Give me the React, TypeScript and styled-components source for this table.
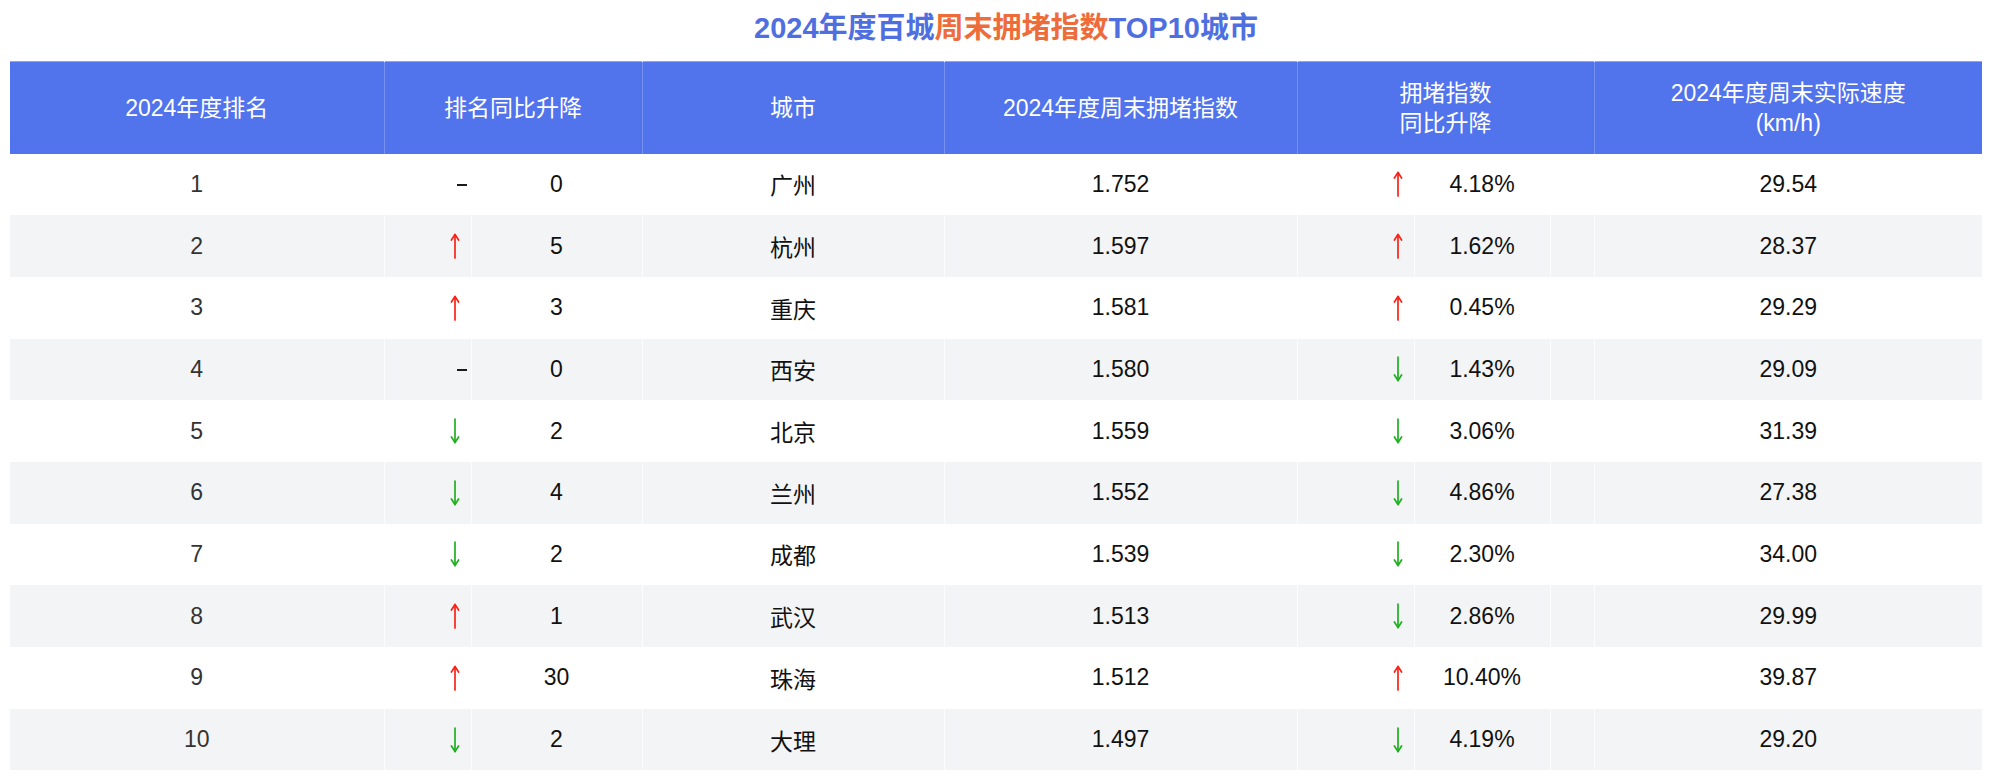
import React from "react";
import styled, { createGlobalStyle } from "styled-components";

const GlobalStyle = createGlobalStyle`
  html, body {
    margin: 0;
    padding: 0;
    background: #ffffff;
  }
  body {
    font-family: "Liberation Sans", "Noto Sans CJK SC", sans-serif;
  }
`;

type Trend = "up" | "down" | "flat";

interface Row {
  rank: number;
  rankTrend: Trend;
  rankDelta: number;
  city: string;
  index: string;
  trend: Trend;
  pct: string;
  speed: string;
}

const rows: Row[] = [
  { rank: 1, rankTrend: "flat", rankDelta: 0, city: "广州", index: "1.752", trend: "up", pct: "4.18%", speed: "29.54" },
  { rank: 2, rankTrend: "up", rankDelta: 5, city: "杭州", index: "1.597", trend: "up", pct: "1.62%", speed: "28.37" },
  { rank: 3, rankTrend: "up", rankDelta: 3, city: "重庆", index: "1.581", trend: "up", pct: "0.45%", speed: "29.29" },
  { rank: 4, rankTrend: "flat", rankDelta: 0, city: "西安", index: "1.580", trend: "down", pct: "1.43%", speed: "29.09" },
  { rank: 5, rankTrend: "down", rankDelta: 2, city: "北京", index: "1.559", trend: "down", pct: "3.06%", speed: "31.39" },
  { rank: 6, rankTrend: "down", rankDelta: 4, city: "兰州", index: "1.552", trend: "down", pct: "4.86%", speed: "27.38" },
  { rank: 7, rankTrend: "down", rankDelta: 2, city: "成都", index: "1.539", trend: "down", pct: "2.30%", speed: "34.00" },
  { rank: 8, rankTrend: "up", rankDelta: 1, city: "武汉", index: "1.513", trend: "down", pct: "2.86%", speed: "29.99" },
  { rank: 9, rankTrend: "up", rankDelta: 30, city: "珠海", index: "1.512", trend: "up", pct: "10.40%", speed: "39.87" },
  { rank: 10, rankTrend: "down", rankDelta: 2, city: "大理", index: "1.497", trend: "down", pct: "4.19%", speed: "29.20" },
];

const colWidths = [374, 87, 171, 302, 353, 117, 136, 44, 388];

const Page = styled.div`
  padding: 0 12px 0 10px;
`;

const Title = styled.h1`
  margin: 0;
  height: 61px;
  line-height: 56px;
  padding-left: 20px;
  text-align: center;
  font-size: 29px;
  font-weight: 700;
  color: #4f6fe1;
  letter-spacing: 0;
`;

const Accent = styled.span`
  color: #ee6c3a;
`;

const Table = styled.table`
  width: 1972px;
  border-collapse: collapse;
  table-layout: fixed;
`;

const HeadRow = styled.tr`
  height: 92px;
  background: #5173ec;
  border-top: 1px solid #8ea4f3;
`;

const Th = styled.th`
  padding: 0;
  color: #ffffff;
  font-size: 23px;
  font-weight: 400;
  line-height: 30px;
  text-align: center;
  vertical-align: middle;
  border-left: 1px solid rgba(255, 255, 255, 0.22);
  &:first-child {
    border-left: none;
  }
`;

const BodyRow = styled.tr<{ $shaded: boolean }>`
  height: 61.7px;
  background: ${(p) => (p.$shaded ? "#f3f4f5" : "#ffffff")};
`;

const Td = styled.td<{ $muted?: boolean }>`
  padding: 0;
  font-size: 23px;
  color: ${(p) => (p.$muted ? "#333333" : "#111111")};
  text-align: center;
  vertical-align: middle;
  border-left: 1px solid rgba(255, 255, 255, 0.7);
  &:first-child {
    border-left: none;
  }
`;

const IndicatorCell = styled.td`
  padding: 0 4px 0 0;
  vertical-align: middle;
  border-left: 1px solid rgba(255, 255, 255, 0.7);
`;

const Indicator = styled.div`
  margin-left: auto;
  width: 24px;
  height: 26px;
  display: flex;
  align-items: center;
  justify-content: center;
`;

const Dash = styled.span`
  display: block;
  width: 13px;
  height: 2px;
  margin-left: 14px;
  margin-top: 2px;
  background: #1a1a1a;
`;

const Arrow = ({ dir }: { dir: "up" | "down" }) => {
  const color = dir === "up" ? "#fa2216" : "#1faf1f";
  return (
    <svg width="10" height="26" viewBox="0 0 10 26" fill="none">
      <g
        stroke={color}
        strokeWidth="1.7"
        strokeLinecap="round"
        strokeLinejoin="round"
        transform={dir === "down" ? "rotate(180 5 13)" : undefined}
      >
        <line x1="5" y1="1.5" x2="5" y2="25" />
        <polyline points="1.4,7 5,1.5 8.6,7" />
      </g>
    </svg>
  );
};

const TrendMark = ({ trend }: { trend: Trend }) => (
  <Indicator>{trend === "flat" ? <Dash /> : <Arrow dir={trend} />}</Indicator>
);

export default function App() {
  return (
    <Page>
      <GlobalStyle />
      <Title>
        2024年度百城<Accent>周末拥堵指数</Accent>TOP10城市
      </Title>
      <Table>
        <colgroup>
          {colWidths.map((w, i) => (
            <col key={i} style={{ width: w }} />
          ))}
        </colgroup>
        <thead>
          <HeadRow>
            <Th>2024年度排名</Th>
            <Th colSpan={2}>排名同比升降</Th>
            <Th>城市</Th>
            <Th>2024年度周末拥堵指数</Th>
            <Th colSpan={3}>
              拥堵指数
              <br />
              同比升降
            </Th>
            <Th>
              2024年度周末实际速度
              <br />
              (km/h)
            </Th>
          </HeadRow>
        </thead>
        <tbody>
          {rows.map((r, i) => (
            <BodyRow key={r.rank} $shaded={i % 2 === 1}>
              <Td $muted>{r.rank}</Td>
              <IndicatorCell>
                <TrendMark trend={r.rankTrend} />
              </IndicatorCell>
              <Td>{r.rankDelta}</Td>
              <Td>{r.city}</Td>
              <Td>{r.index}</Td>
              <IndicatorCell>
                <TrendMark trend={r.trend} />
              </IndicatorCell>
              <Td>{r.pct}</Td>
              <Td />
              <Td>{r.speed}</Td>
            </BodyRow>
          ))}
        </tbody>
      </Table>
    </Page>
  );
}
